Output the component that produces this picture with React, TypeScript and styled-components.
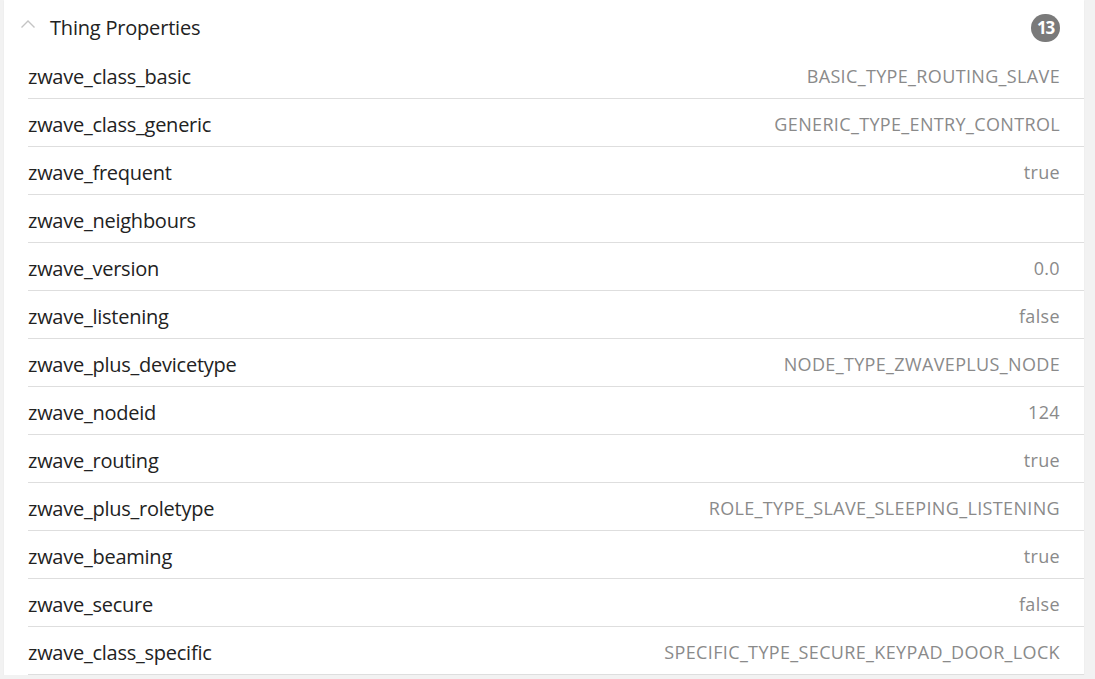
import React from 'react'
import styled, { createGlobalStyle } from 'styled-components'

const GlobalStyle = createGlobalStyle`
    html, body {
        margin: 0;
        padding: 0;
        background: #f2f2f2;
    }
    body {
        font-family: 'Open Sans', 'Noto Sans', sans-serif;
    }
`

type Property = { name: string; value: string }

const properties: Property[] = [
    { name: 'zwave_class_basic', value: 'BASIC_TYPE_ROUTING_SLAVE' },
    { name: 'zwave_class_generic', value: 'GENERIC_TYPE_ENTRY_CONTROL' },
    { name: 'zwave_frequent', value: 'true' },
    { name: 'zwave_neighbours', value: '' },
    { name: 'zwave_version', value: '0.0' },
    { name: 'zwave_listening', value: 'false' },
    { name: 'zwave_plus_devicetype', value: 'NODE_TYPE_ZWAVEPLUS_NODE' },
    { name: 'zwave_nodeid', value: '124' },
    { name: 'zwave_routing', value: 'true' },
    { name: 'zwave_plus_roletype', value: 'ROLE_TYPE_SLAVE_SLEEPING_LISTENING' },
    { name: 'zwave_beaming', value: 'true' },
    { name: 'zwave_secure', value: 'false' },
    { name: 'zwave_class_specific', value: 'SPECIFIC_TYPE_SECURE_KEYPAD_DOOR_LOCK' },
]

const Card = styled.section`
    margin: 0 11px 0 4px;
    background: #ffffff;
    box-shadow: 0 1px 1px rgba(0, 0, 0, 0.08);
`

const Header = styled.div`
    display: flex;
    align-items: center;
    height: 51px;
    padding: 0 24px 0 16px;
    box-sizing: border-box;
`

const Chevron = styled.svg`
    width: 16px;
    height: 10px;
    margin-right: 14px;
    margin-top: -3px;
`

const Title = styled.div`
    flex: 1;
    font-size: 20px;
    color: #222222;
    letter-spacing: -0.2px;
    margin-top: 4px;
`

const Badge = styled.div`
    width: 29px;
    height: 28px;
    margin-top: 4px;
    border-radius: 14px;
    background: #7a7a7a;
    color: #ffffff;
    font-size: 17px;
    font-weight: 700;
    letter-spacing: -1.2px;
    display: flex;
    align-items: center;
    justify-content: center;
`

const List = styled.ul`
    list-style: none;
    margin: 0;
    padding: 0 0 0 24px;
`

const Row = styled.li`
    display: flex;
    align-items: center;
    justify-content: space-between;
    height: 48px;
    box-sizing: border-box;
    padding: 3px 24px 0 0;
    border-bottom: 1px solid #dedede;
`

const Name = styled.span`
    font-size: 20px;
    color: #222222;
    letter-spacing: -0.25px;
`

const Value = styled.span`
    font-size: 18px;
    color: #8a8a8a;
    letter-spacing: 0.35px;
`

export default function App() {
    return (
        <>
            <GlobalStyle />
            <Card>
                <Header>
                    <Chevron viewBox="0 0 16 10">
                        <path d="M1.5 8.5 L8 2 L14.5 8.5" fill="none" stroke="#c4c4c4" strokeWidth="1.4" />
                    </Chevron>
                    <Title>Thing Properties</Title>
                    <Badge>13</Badge>
                </Header>
                <List>
                    {properties.map((p) => (
                        <Row key={p.name}>
                            <Name>{p.name}</Name>
                            <Value>{p.value}</Value>
                        </Row>
                    ))}
                </List>
            </Card>
        </>
    )
}
